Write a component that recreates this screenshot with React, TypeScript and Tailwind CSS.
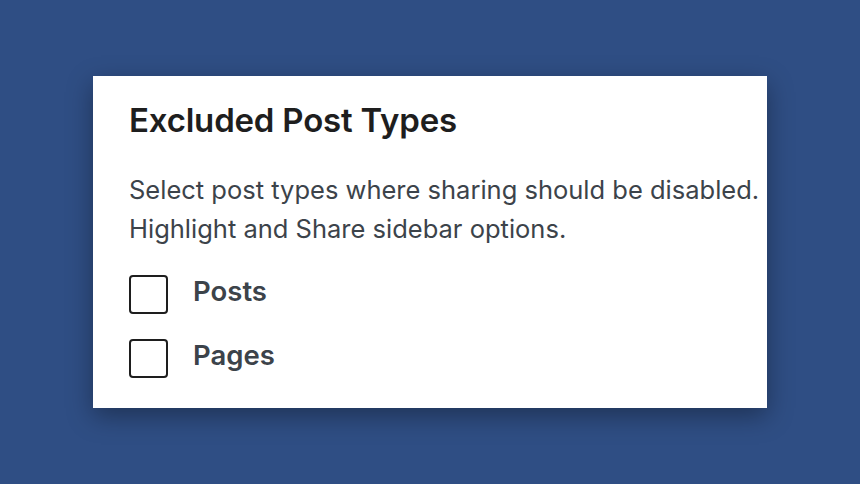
export default function App() {
  return (
    <div className="w-[860px] h-[484px] bg-[#2f4e84] overflow-hidden relative" style={{ fontFamily: 'Inter, "Noto Sans", sans-serif' }}>
      <div className="absolute left-[93px] top-[76px] w-[674px] h-[332px] bg-white shadow-[0_8px_24px_rgba(0,0,0,0.35)] overflow-hidden">
        <div className="pl-[36px] pt-[24px] w-[800px]">
          <h2 className="text-[33px] font-semibold text-[#1e1e1e] leading-[40px] tracking-[-0.2px]">Excluded Post Types</h2>
          <p className="mt-[30px] text-[25.5px] leading-[39px] text-[#3c434a]">
            Select post types where sharing should be disabled.
            <br />
            Highlight and Share sidebar options.
          </p>
          <div className="mt-[27px] flex flex-col gap-[25px]">
            {['Posts', 'Pages'].map((l) => (
              <label key={l} className="flex items-center gap-[25px]">
                <span className="w-[39px] h-[39px] border-2 border-[#1e1e1e] rounded-[4px] bg-white" />
                <span className="text-[27.5px] font-semibold text-[#3c434a] leading-[33px] pb-[6px]">{l}</span>
              </label>
            ))}
          </div>
        </div>
      </div>
    </div>
  );
}
